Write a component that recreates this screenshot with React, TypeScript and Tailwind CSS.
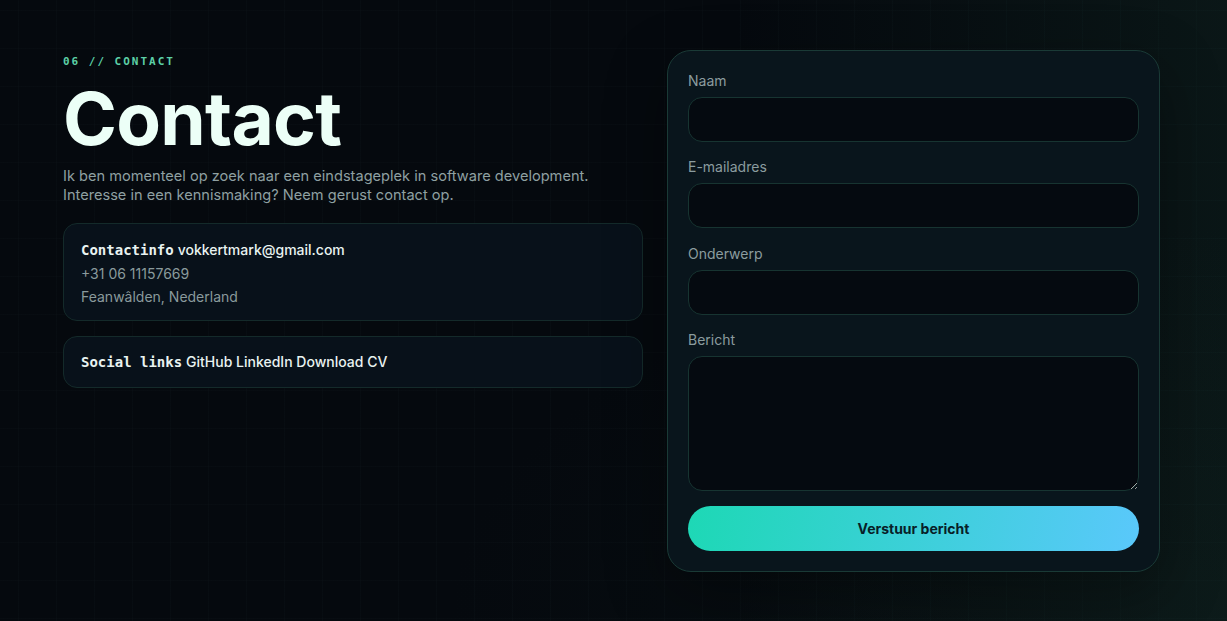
import React from "react";

const sans = "font-['Inter','Noto_Sans',sans-serif]";
const mono = "font-['DejaVu_Sans_Mono','Liberation_Mono',monospace]";

function Field({ label, tall }: { label: string; tall?: boolean }) {
  return (
    <div className="flex flex-col">
      <label className="text-[14px] leading-5 text-[#8b9c9f] mb-[6px]">{label}</label>
      {tall ? (
        <textarea className="h-[135px] w-full resize-y rounded-[14px] border border-[#173431] bg-[#050a10] outline-none" />
      ) : (
        <input className="h-[45px] w-full rounded-[14px] border border-[#173431] bg-[#050a10] outline-none" />
      )}
    </div>
  );
}

export default function App() {
  return (
    <div
      className={`relative min-h-[621px] w-full overflow-hidden bg-[#05090e] ${sans}`}
    >
      <div className="pointer-events-none absolute inset-0 bg-[linear-gradient(to_right,transparent_60%,rgba(16,36,32,0.5))]" />
      <div className="pointer-events-none absolute inset-0 bg-[radial-gradient(ellipse_at_100%_100%,rgba(20,42,36,0.22),transparent_45%)]" />
      <div className="pointer-events-none absolute inset-0 bg-[linear-gradient(to_right,rgba(40,70,70,0.07)_1px,transparent_1px),linear-gradient(to_bottom,rgba(40,70,70,0.06)_1px,transparent_1px)] bg-[size:38px_38px] bg-[position:18px_10px]" />
      <div className="relative flex items-start gap-6 pl-[63px] pt-[50px]">
        <div className="w-[580px] flex flex-col pt-[1px]">
          <div className={`${mono} mt-[3px] text-[11px] font-bold tracking-[0.18em] text-[#5ccfa6] leading-4`}>
            06 // CONTACT
          </div>
          <h1 className="mt-[9px] text-[73px] font-bold leading-[80px] tracking-[-0.01em] text-[#ecfff7]">
            Contact
          </h1>
          <p className="mt-[8px] text-[14.6px] leading-[19px] text-[#8fa0a2]">
            Ik ben momenteel op zoek naar een eindstageplek in software development.
            <br />
            Interesse in een kennismaking? Neem gerust contact op.
          </p>
          <div className="mt-[18px] rounded-[14px] border border-[#142a2a] bg-[#08111a] px-[17px] pt-[14px] pb-[12px]">
            <div className="text-[14px] leading-[23px] text-[#e9f3f1]">
              <span className={`${mono} font-bold`}>Contactinfo</span>{" "}
              <span className="font-medium">vokkertmark@gmail.com</span>
            </div>
            <div className="text-[14px] leading-[23px] text-[#8a9a9c]">+31 06 11157669</div>
            <div className="text-[14px] leading-[23px] text-[#8a9a9c]">Feanwâlden, Nederland</div>
          </div>
          <div className="mt-[15px] rounded-[14px] border border-[#142a2a] bg-[#08111a] px-[17px] py-[14px]">
            <div className="text-[14px] leading-[21px] text-[#e9f3f1]">
              <span className={`${mono} font-bold`}>Social links</span>{" "}
              <span className="font-medium">GitHub LinkedIn Download CV</span>
            </div>
          </div>
        </div>
        <div className="w-[493px] rounded-[24px] border border-[#1a3a36] bg-[#09151c] px-5 pt-[20px] pb-[20px] shadow-[0_20px_60px_rgba(0,0,0,0.35)]">
          <div className="flex flex-col gap-[15.3px]">
            <Field label="Naam" />
            <Field label="E-mailadres" />
            <Field label="Onderwerp" />
            <Field label="Bericht" tall />
            <button className="h-[45px] w-full rounded-full bg-[linear-gradient(100deg,#1dd8b5,#5ac8fb)] text-[14px] font-bold text-[#082027]">
              Verstuur bericht
            </button>
          </div>
        </div>
      </div>
    </div>
  );
}
